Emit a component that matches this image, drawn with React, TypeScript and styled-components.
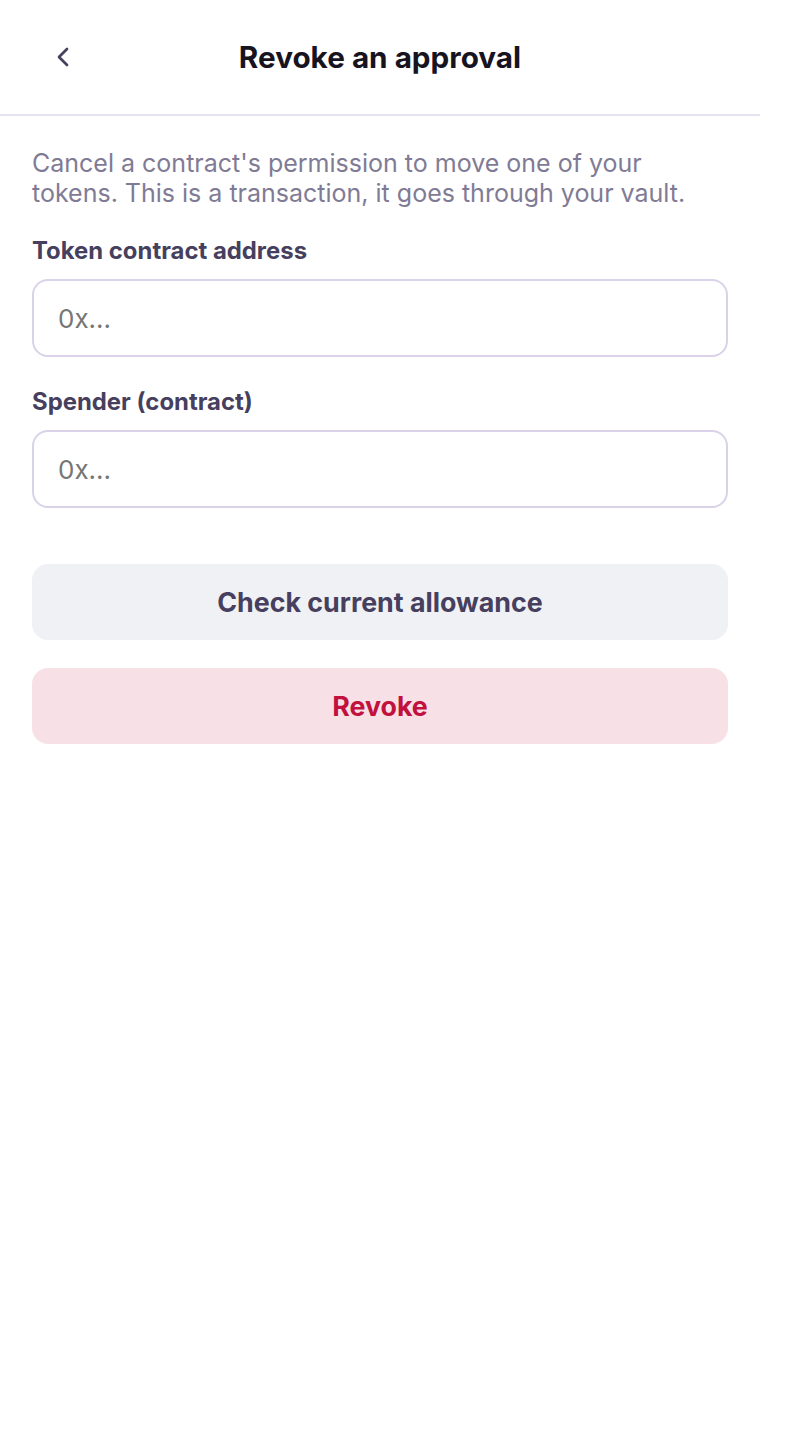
import React from "react";
import styled, { createGlobalStyle } from "styled-components";

const GlobalStyle = createGlobalStyle`
  html, body {
    margin: 0;
    padding: 0;
    background: #ffffff;
  }
  body {
    font-family: Inter, "Noto Sans", "Liberation Sans", sans-serif;
    -webkit-font-smoothing: antialiased;
  }
  * { box-sizing: border-box; }
`;

const Screen = styled.div`
  width: 760px;
  min-height: 1440px;
  background: #ffffff;
  display: flex;
  flex-direction: column;
`;

const Header = styled.header`
  height: 116px;
  border-bottom: 2px solid #e5e3ef;
  display: grid;
  grid-template-columns: 1fr auto 1fr;
  align-items: center;
  padding: 0 32px;
`;

const BackButton = styled.button`
  width: 44px;
  height: 44px;
  margin-left: 9px;
  border: none;
  background: transparent;
  padding: 0;
  display: flex;
  align-items: center;
  justify-content: center;
  color: #463f5e;
  cursor: pointer;
  justify-self: start;
`;

const Title = styled.h1`
  margin: 0;
  font-size: 29.7px;
  line-height: 36px;
  font-weight: 700;
  color: #17141f;
`;

const Content = styled.main`
  padding: 32px 32px;
  display: flex;
  flex-direction: column;
`;

const Description = styled.p`
  margin: 0 0 28px;
  max-width: 668px;
  font-size: 25px;
  line-height: 30px;
  color: #7f7b95;
`;

const Field = styled.div<{ $gap?: number }>`
  display: flex;
  flex-direction: column;
  gap: 13px;
  margin-bottom: ${(p) => p.$gap ?? 0}px;
`;

const Label = styled.label`
  font-size: 23.9px;
  line-height: 30px;
  font-weight: 700;
  color: #463f5e;
`;

const Input = styled.input`
  width: 100%;
  height: 78px;
  border: 2px solid #d9d2e8;
  border-radius: 16px;
  padding: 0 24px;
  font-family: Inter, "Noto Sans", sans-serif;
  font-size: 26px;
  color: #17141f;
  background: #ffffff;
  outline: none;
  &::placeholder {
    color: #767676;
  }
`;

const Actions = styled.div`
  display: flex;
  flex-direction: column;
  gap: 28px;
  margin-top: 56px;
`;

const ActionButton = styled.button<{ $variant: "neutral" | "danger" }>`
  width: 100%;
  height: 76px;
  border: none;
  border-radius: 16px;
  font-family: Inter, "Noto Sans", sans-serif;
  font-size: 26.8px;
  font-weight: 700;
  cursor: pointer;
  background: ${(p) => (p.$variant === "danger" ? "#f7e1e7" : "#f0f1f5")};
  color: ${(p) => (p.$variant === "danger" ? "#c1123e" : "#463f5e")};
`;

const ChevronLeft = () => (
  <svg width="32" height="32" viewBox="0 0 24 24" fill="none" stroke="currentColor" strokeWidth="2" strokeLinecap="round" strokeLinejoin="round">
    <path d="m15 18-6-6 6-6" />
  </svg>
);

export default function App() {
  return (
    <>
      <GlobalStyle />
      <Screen>
        <Header>
          <BackButton aria-label="Back">
            <ChevronLeft />
          </BackButton>
          <Title>Revoke an approval</Title>
          <span />
        </Header>
        <Content>
          <Description>
            Cancel a contract's permission to move one of your tokens. This is a transaction, it goes through your vault.
          </Description>
          <Field $gap={30}>
            <Label>Token contract address</Label>
            <Input placeholder="0x..." />
          </Field>
          <Field>
            <Label>Spender (contract)</Label>
            <Input placeholder="0x..." />
          </Field>
          <Actions>
            <ActionButton $variant="neutral">Check current allowance</ActionButton>
            <ActionButton $variant="danger">Revoke</ActionButton>
          </Actions>
        </Content>
      </Screen>
    </>
  );
}
